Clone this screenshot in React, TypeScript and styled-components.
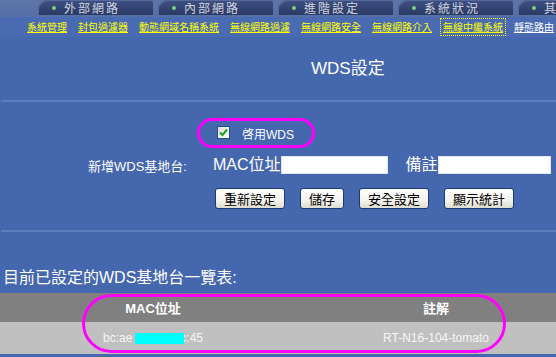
import React from "react"
import styled, { createGlobalStyle } from "styled-components"

const GlobalStyle = createGlobalStyle`
  html, body {
    margin: 0;
    padding: 0;
  }
  body {
    width: 556px;
    height: 357px;
    overflow: hidden;
    background: #4567ad;
    color: #ffffff;
    font-family: "Liberation Sans", "Noto Sans CJK TC", sans-serif;
  }
`

const Page = styled.div`
  width: 556px;
  height: 357px;
  display: flex;
  flex-direction: column;
  overflow: hidden;
`

const TabBar = styled.div`
  height: 17px;
  flex: 0 0 17px;
  display: flex;
  gap: 5px;
  padding-left: 38px;
  background: linear-gradient(#5d76a9, #5570a6);
  overflow: hidden;
  box-sizing: border-box;
`

const Tab = styled.div`
  flex: 0 0 115px;
  height: 15px;
  box-sizing: border-box;
  border-radius: 9px 3px 0 0;
  background: linear-gradient(#3e5083, #2a3964);
  box-shadow: inset 1px 1px 0 #56689a;
  display: flex;
  align-items: center;
  gap: 8px;
  padding-left: 14px;
  color: #cdd2de;
  font: 12px "Noto Sans CJK TC", sans-serif;
  letter-spacing: 2px;
  white-space: nowrap;
`

const Dot = styled.span`
  width: 4px;
  height: 4px;
  border-radius: 50%;
  background: #78d078;
`

const SubNav = styled.div`
  height: 20px;
  flex: 0 0 20px;
  display: flex;
  align-items: center;
  gap: 11px;
  padding-left: 27px;
  background: #4a6bb1;
  white-space: nowrap;
`

const NavLink = styled.a<{ $active?: boolean; $plain?: boolean }>`
  color: ${(p) => (p.$plain ? "#ffffff" : "#ffff00")};
  font: 10px/12px "Noto Sans CJK TC", sans-serif;
  text-decoration: underline;
  outline: ${(p) => (p.$active ? "1px dotted #ffff00" : "none")};
  outline-offset: 2px;
`

const TitleRow = styled.div`
  height: 63px;
  flex: 0 0 63px;
  box-sizing: border-box;
  padding: 22px 0 0 311px;
  font-size: 17px;
  line-height: 20px;
`

const Divider = styled.div`
  height: 2px;
  flex: 0 0 2px;
  margin-left: 1px;
  background: #5c7cbd;
`

const EnableRow = styled.div`
  margin: 16px 0 0 197px;
  display: flex;
`

const Highlight = styled.div`
  width: 118px;
  height: 30px;
  box-sizing: border-box;
  border: 3px solid #ff00ff;
  border-radius: 15px;
  display: flex;
  align-items: center;
  gap: 12px;
  padding: 0 0 0 17px;
  font-size: 12px;
`

const CheckBox = styled.span`
  width: 13px;
  height: 13px;
  box-sizing: border-box;
  border: 1px solid #1c5180;
  background: linear-gradient(135deg, #dcdcd7, #ffffff);
  display: flex;
  align-items: center;
  justify-content: center;
  margin-top: -2px;
`

const AddRow = styled.div`
  margin: 8px 0 0 88px;
  height: 18px;
  display: flex;
  align-items: center;
`

const AddLabel = styled.span`
  width: 125px;
  font-size: 13px;
`

const FieldLabel = styled.span<{ $gap?: number }>`
  margin-left: ${(p) => p.$gap ?? 0}px;
  font-size: 16px;
  line-height: 18px;
`

const TextInput = styled.input<{ $w: number }>`
  width: ${(p) => p.$w}px;
  height: 18px;
  box-sizing: border-box;
  border: 1px solid #dfe6f2;
  background: #ffffff;
  padding: 0 2px;
  margin: 0;
`

const ButtonRow = styled.div`
  margin: 14px 0 0 215px;
  display: flex;
  gap: 15px;
`

const Button = styled.button`
  height: 21px;
  padding: 0 8px;
  margin: 0;
  border: 1px solid #1d3b74;
  border-radius: 3px;
  background: linear-gradient(#ffffff 0%, #f4f3ee 60%, #dedbcf 100%);
  color: #000000;
  font: 13px "Noto Sans CJK TC", sans-serif;
  line-height: 19px;
`

const Caption = styled.div`
  margin: 37px 0 0 3px;
  font-size: 16px;
  line-height: 18px;
  white-space: nowrap;
`

const Table = styled.div`
  position: relative;
  margin-top: 6px;
  width: 566px;
  display: grid;
  grid-template-columns: 306px 260px;
`

const HeadCell = styled.div`
  height: 29px;
  background: #808080;
  display: flex;
  align-items: center;
  justify-content: center;
  font-size: 13px;
  font-weight: bold;
`

const BodyCell = styled.div`
  height: 32px;
  background: #c0c0c0;
  display: flex;
  align-items: center;
  justify-content: center;
  font-size: 12px;
  color: #f6f6f6;
  white-space: nowrap;
`

const Mask = styled.span`
  position: relative;
  z-index: 1;
  display: inline-block;
  width: 49px;
  height: 11px;
  margin: 0 -4px 0 3px;
  background: #00ffff;
`

const TableRing = styled.div`
  position: absolute;
  left: 82px;
  top: 1px;
  width: 424px;
  height: 59px;
  box-sizing: border-box;
  border: 3px solid #ff00ff;
  border-radius: 30px;
  pointer-events: none;
`

const tabs = ["外部網路", "內部網路", "進階設定", "系統狀況", "其他設定"]
const links = [
  "系統管理",
  "封包過濾器",
  "動態網域名稱系統",
  "無線網路過濾",
  "無線網路安全",
  "無線網路介入",
  "無線中繼系統",
  "靜態路由",
]

export default function App() {
  return (
    <Page>
      <GlobalStyle />
      <TabBar>
        {tabs.map((t) => (
          <Tab key={t}>
            <Dot />
            {t}
          </Tab>
        ))}
      </TabBar>
      <SubNav>
        {links.map((l, i) => (
          <NavLink key={l} $active={i === 6} $plain={i === 7}>
            {l}
          </NavLink>
        ))}
      </SubNav>
      <TitleRow>WDS設定</TitleRow>
      <Divider />
      <EnableRow>
        <Highlight>
          <CheckBox>
            <svg width="9" height="9" viewBox="0 0 9 9">
              <path d="M1 4.5 L3.5 7 L8 1.5" fill="none" stroke="#21a121" strokeWidth="2" />
            </svg>
          </CheckBox>
          啓用WDS
        </Highlight>
      </EnableRow>
      <AddRow>
        <AddLabel>新增WDS基地台:</AddLabel>
        <FieldLabel>MAC位址</FieldLabel>
        <TextInput $w={107} />
        <FieldLabel $gap={18}>備註</FieldLabel>
        <TextInput $w={113} />
      </AddRow>
      <ButtonRow>
        <Button>重新設定</Button>
        <Button>儲存</Button>
        <Button>安全設定</Button>
        <Button>顯示統計</Button>
      </ButtonRow>
      <Divider style={{ marginTop: 21 }} />
      <Caption>目前已設定的WDS基地台一覽表:</Caption>
      <Table>
        <HeadCell>MAC位址</HeadCell>
        <HeadCell>註解</HeadCell>
        <BodyCell>
          bc:ae
          <Mask />
          c:45
        </BodyCell>
        <BodyCell>RT-N16-104-tomato</BodyCell>
        <TableRing />
      </Table>
    </Page>
  )
}
